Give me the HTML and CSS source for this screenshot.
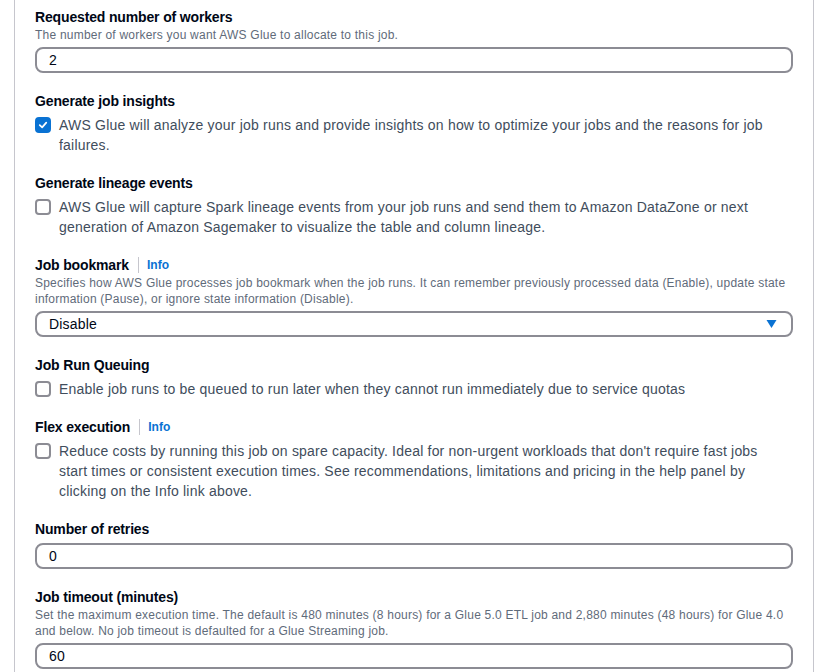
FILE: index.html
```html
<!DOCTYPE html>
<html lang="en">
<head>
<meta charset="utf-8">
<title>Job details</title>
<link rel="stylesheet" href="styles.css">
</head>
<body>
<div class="panel">
  <div class="form">
    <div class="field">
      <div class="label">Requested number of workers</div>
      <div class="desc">The number of workers you want AWS Glue to allocate to this job.</div>
      <div class="input">2</div>
    </div>

    <div class="field">
      <div class="label">Generate job insights</div>
      <label class="check">
        <span class="box checked"><svg viewBox="0 0 14 14" width="14" height="14"><path d="M3.2 7.2 L6 9.8 L10.8 4.2" fill="none" stroke="#fff" stroke-width="2" stroke-linecap="round" stroke-linejoin="round"/></svg></span>
        <span class="check-text">AWS Glue will analyze your job runs and provide insights on how to optimize your jobs and the reasons for job failures.</span>
      </label>
    </div>

    <div class="field">
      <div class="label">Generate lineage events</div>
      <label class="check">
        <span class="box"></span>
        <span class="check-text">AWS Glue will capture Spark lineage events from your job runs and send them to Amazon DataZone or next generation of Amazon Sagemaker to visualize the table and column lineage.</span>
      </label>
    </div>

    <div class="field">
      <div class="label">Job bookmark<span class="sep"></span><a class="info">Info</a></div>
      <div class="desc">Specifies how AWS Glue processes job bookmark when the job runs. It can remember previously processed data (Enable), update state information (Pause), or ignore state information (Disable).</div>
      <div class="input select">
        <span>Disable</span>
        <svg class="caret" viewBox="0 0 10 8" width="11" height="8"><path d="M0 0 H10 L5 8 Z" fill="#0972d3"/></svg>
      </div>
    </div>

    <div class="field">
      <div class="label">Job Run Queuing</div>
      <label class="check">
        <span class="box"></span>
        <span class="check-text">Enable job runs to be queued to run later when they cannot run immediately due to service quotas</span>
      </label>
    </div>

    <div class="field">
      <div class="label">Flex execution<span class="sep"></span><a class="info">Info</a></div>
      <label class="check">
        <span class="box"></span>
        <span class="check-text">Reduce costs by running this job on spare capacity. Ideal for non-urgent workloads that don't require fast jobs start times or consistent execution times. See recommendations, limitations and pricing in the help panel by clicking on the Info link above.</span>
      </label>
    </div>

    <div class="field">
      <div class="label">Number of retries</div>
      <div class="input">0</div>
    </div>

    <div class="field">
      <div class="label">Job timeout (minutes)</div>
      <div class="desc">Set the maximum execution time. The default is 480 minutes (8 hours) for a Glue 5.0 ETL job and 2,880 minutes (48 hours) for Glue 4.0 and below. No job timeout is defaulted for a Glue Streaming job.</div>
      <div class="input">60</div>
    </div>
  </div>
</div>
</body>
</html>
```

FILE: styles.css
```css
html, body {
  margin: 0;
  padding: 0;
  background: #ffffff;
}

body {
  font-family: "Liberation Sans", Arial, sans-serif;
  color: #000716;
  overflow: hidden;
  height: 672px;
}

.panel {
  margin-left: 14px;
  width: 798px;
  min-height: 672px;
  border-left: 1px solid #c6c6cd;
  border-right: 1px solid #c6c6cd;
  box-sizing: content-box;
}

.form {
  padding: 7px 20px 0 20px;
  display: flex;
  flex-direction: column;
  gap: 18px;
}

.field {
  display: flex;
  flex-direction: column;
}

.label {
  font-size: 14px;
  font-weight: 700;
  line-height: 20px;
  color: #000716;
  letter-spacing: -0.15px;
  display: flex;
  align-items: center;
}

.sep {
  display: inline-block;
  width: 1px;
  height: 16px;
  background: #c6c6cd;
  margin: 0 8px 0 9px;
}

.info {
  font-size: 12px;
  font-weight: 700;
  color: #0972d3;
  line-height: 16px;
  letter-spacing: 0.1px;
}

.desc {
  font-size: 12px;
  line-height: 16px;
  color: #5f6b7a;
  letter-spacing: 0.22px;
}

.input {
  margin-top: 4px;
  height: 26px;
  box-sizing: border-box;
  border: 2px solid #8c8c94;
  border-radius: 8px;
  padding: 0 12px;
  font-size: 14px;
  line-height: 22px;
  color: #000716;
  letter-spacing: 0.2px;
  display: flex;
  align-items: center;
}

.select {
  justify-content: space-between;
  padding-right: 14px;
}

.caret {
  display: block;
}

.check {
  margin-top: 4px;
  padding-right: 6px;
  display: flex;
  align-items: flex-start;
  gap: 8px;
}

.box {
  flex: none;
  width: 16px;
  height: 16px;
  margin-top: 2px;
  box-sizing: border-box;
  border: 2px solid #8c8c94;
  border-radius: 4px;
  background: #fff;
  display: flex;
  align-items: center;
  justify-content: center;
}

.box.checked {
  background: #0972d3;
  border-color: #0972d3;
}

.box svg {
  display: block;
}

.check-text {
  font-size: 14px;
  line-height: 20px;
  color: #414d5c;
  letter-spacing: 0.2px;
}
```
